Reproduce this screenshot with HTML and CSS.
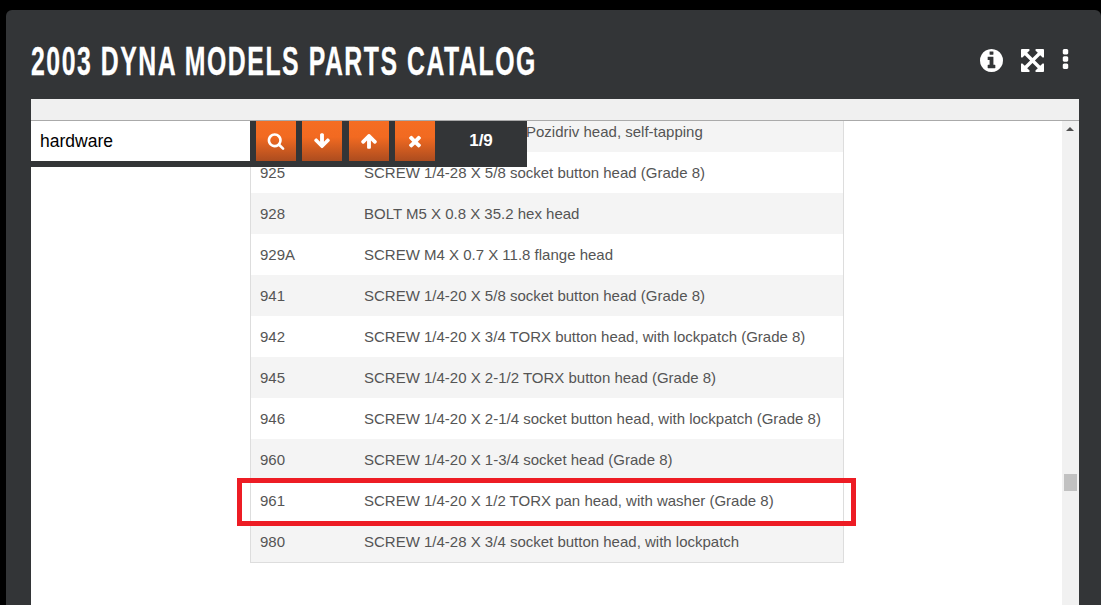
FILE: index.html
```html
<!DOCTYPE html>
<html lang="en">
<head>
<meta charset="utf-8">
<title>2003 Dyna Models Parts Catalog</title>
<link rel="stylesheet" href="styles.css">
</head>
<body>
<main class="panel">
  <header class="head">
    <h1 class="title">2003 DYNA MODELS PARTS CATALOG</h1>
    <div class="head-icons">
      <svg class="ico-info" viewBox="128 128 1536 1536"><path d="M1152 1376v-160q0-14-9-23t-23-9h-96v-512q0-14-9-23t-23-9h-320q-14 0-23 9t-9 23v160q0 14 9 23t23 9h96v320h-96q-14 0-23 9t-9 23v160q0 14 9 23t23 9h448q14 0 23-9t9-23zm-128-896v-160q0-14-9-23t-23-9h-192q-14 0-23 9t-9 23v160q0 14 9 23t23 9h192q14 0 23-9t9-23zm640 416q0 209-103 385.5t-279.5 279.5-385.5 103-385.5-103-279.5-279.5-103-385.5 103-385.5 279.5-279.5 385.5-103 385.5 103 279.5 279.5 103 385.5z"/></svg>
      <svg class="ico-expand" viewBox="128 128 1536 1536"><path d="M1411 541l-355 355 355 355 144-144q29-31 70-14 39 17 39 59v448q0 26-19 45t-45 19h-448q-42 0-59-40-17-39 14-69l144-144-355-355-355 355 144 144q31 30 14 69-17 40-59 40h-448q-26 0-45-19t-19-45v-448q0-42 40-59 39-17 69 14l144 144 355-355-355-355-144 144q-19 19-45 19-12 0-24-5-40-17-40-59v-448q0-26 19-45t45-19h448q42 0 59 40 17 39-14 69l-144 144 355 355 355-355-144-144q-31-30-14-69 17-40 59-40h448q26 0 45 19t19 45v448q0 42-39 59-13 5-25 5-26 0-45-19z"/></svg>
      <svg class="ico-more" viewBox="704 128 384 1408"><path d="M1088 1248v192q0 40-28 68t-68 28h-192q-40 0-68-28t-28-68v-192q0-40 28-68t68-28h192q40 0 68 28t28 68zm0-512v192q0 40-28 68t-68 28h-192q-40 0-68-28t-28-68v-192q0-40 28-68t68-28h192q40 0 68 28t28 68zm0-512v192q0 40-28 68t-68 28h-192q-40 0-68-28t-28-68v-192q0-40 28-68t68-28h192q40 0 68 28t28 68z"/></svg>
    </div>
  </header>
  <section class="viewer">
    <div class="strip"></div>
    <div class="body-row">
      <div class="search">
        <div class="search-input">hardware</div>
        <div class="search-actions">
          <button class="btn"><svg class="btn-ico" viewBox="0 0 1792 1792"><path d="M1216 832q0-185-131.5-316.5t-316.5-131.5-316.5 131.5-131.5 316.5 131.5 316.5 316.5 131.5 316.5-131.5 131.5-316.5zm512 832q0 52-38 90t-90 38q-54 0-90-38l-343-342q-179 124-399 124-143 0-273.5-55.5t-225-150-150-225-55.5-273.5 55.5-273.5 150-225 225-150 273.5-55.5 273.5 55.5 225 150 150 225 55.5 273.5q0 220-124 399l343 343q37 37 37 90z"/></svg></button>
          <button class="btn"><svg class="btn-ico" viewBox="0 0 1792 1792"><path d="M1675 832q0 53-37 90l-651 652q-39 37-91 37-53 0-90-37l-651-652q-38-36-38-90 0-53 38-91l74-75q39-37 91-37 53 0 90 37l294 294v-704q0-52 38-90t90-38h128q52 0 90 38t38 90v704l294-294q37-37 90-37 52 0 91 37l75 75q37 39 37 91z"/></svg></button>
          <button class="btn btn-up"><svg class="btn-ico" viewBox="0 0 1792 1792"><path d="M1675 971q0 51-37 90l-75 75q-38 38-91 38-54 0-90-38l-294-293v704q0 52-37.5 84.5t-90.5 32.5h-128q-53 0-90.5-32.5t-37.5-84.5v-704l-294 293q-36 38-90 38t-90-38l-75-75q-38-38-38-90 0-53 38-91l651-651q35-37 90-37 54 0 91 37l651 651q37 39 37 91z"/></svg></button>
          <button class="btn"><svg class="btn-ico" viewBox="0 0 1792 1792"><path d="M1490 1322q0 40-28 68l-136 136q-28 28-68 28t-68-28l-294-294-294 294q-28 28-68 28t-68-28l-136-136q-28-28-28-68t28-68l294-294-294-294q-28-28-28-68t28-68l136-136q28-28 68-28t68 28l294 294 294-294q28-28 68-28t68 28l136 136q28 28 28 68t-28 68l-294 294 294 294q28 28 28 68z"/></svg></button>
          <span class="count">1/9</span>
        </div>
      </div>
      <div class="scroll-area">
        <div class="parts">
          <div class="part part-clipped"><span class="part-name">Pozidriv head, self-tapping</span></div>
          <div class="part"><span class="part-no">925</span><span class="part-name">SCREW 1/4-28 X 5/8 socket button head (Grade 8)</span></div>
          <div class="part"><span class="part-no">928</span><span class="part-name">BOLT M5 X 0.8 X 35.2 hex head</span></div>
          <div class="part"><span class="part-no">929A</span><span class="part-name">SCREW M4 X 0.7 X 11.8 flange head</span></div>
          <div class="part"><span class="part-no">941</span><span class="part-name">SCREW 1/4-20 X 5/8 socket button head (Grade 8)</span></div>
          <div class="part"><span class="part-no">942</span><span class="part-name">SCREW 1/4-20 X 3/4 TORX button head, with lockpatch (Grade 8)</span></div>
          <div class="part"><span class="part-no">945</span><span class="part-name">SCREW 1/4-20 X 2-1/2 TORX button head (Grade 8)</span></div>
          <div class="part"><span class="part-no">946</span><span class="part-name">SCREW 1/4-20 X 2-1/4 socket button head, with lockpatch (Grade 8)</span></div>
          <div class="part"><span class="part-no">960</span><span class="part-name">SCREW 1/4-20 X 1-3/4 socket head (Grade 8)</span></div>
          <div class="part part-marked"><span class="part-no">961</span><span class="part-name">SCREW 1/4-20 X 1/2 TORX pan head, with washer (Grade 8)</span><span class="marker"></span></div>
          <div class="part"><span class="part-no">980</span><span class="part-name">SCREW 1/4-28 X 3/4 socket button head, with lockpatch</span></div>
        </div>
      </div>
      <div class="scrollbar">
        <span class="scroll-arrow"></span>
        <span class="scroll-thumb"></span>
      </div>
    </div>
  </section>
</main>
</body>
</html>
```
FILE: styles.css
```css
html, body {
  margin: 0;
  height: 605px;
  overflow: hidden;
  background: #000;
}

.panel {
  margin: 10px 0 0 6px;
  height: 595px;
  box-sizing: border-box;
  padding: 0 22px 0 25px;
  background: #333537;
  border-radius: 6px 6px 0 0;
  display: flex;
  flex-direction: column;
}

.head {
  height: 89px;
  flex: none;
  display: flex;
  align-items: flex-start;
  justify-content: space-between;
}

.title {
  margin: 30px 0 0;
  font: 700 40px/42px "Liberation Sans", sans-serif;
  letter-spacing: 2.5px;
  color: #fff;
  white-space: nowrap;
  transform: scaleX(0.62);
  transform-origin: left center;
  -webkit-text-stroke: 0.3px #fff;
}

.head-icons {
  display: flex;
  align-items: flex-start;
  margin: 39px 10px 0 0;
  fill: #fff;
}

.ico-info {
  width: 23px;
  height: 23px;
  margin-right: 18px;
}

.ico-expand {
  width: 23px;
  height: 23px;
  margin-right: 18px;
}

.ico-more {
  width: 7px;
  height: 20px;
}

.viewer {
  flex: 1;
  min-height: 0;
  display: flex;
  flex-direction: column;
  background: #fff;
}

.strip {
  height: 21px;
  flex: none;
  background: #f0f0f0;
  border-bottom: 1px solid #aaa;
}

.body-row {
  flex: 1;
  min-height: 0;
  display: flex;
  position: relative;
}

.search {
  position: absolute;
  z-index: 2;
  left: 0;
  top: 0;
  display: flex;
  background: #333537;
  padding-bottom: 6px;
}

.search-input {
  width: 210px;
  height: 40px;
  padding-left: 9px;
  background: #fff;
  font: 17.5px/40px "Liberation Sans", Arial, sans-serif;
  color: #000;
}

.search-actions {
  display: flex;
  gap: 6px;
  padding-left: 6px;
}

.btn {
  width: 40px;
  height: 40px;
  padding: 0;
  border: 0;
  display: flex;
  align-items: center;
  justify-content: center;
  background: linear-gradient(#f56d22 0%, #f26a21 40%, #ac4c1f 100%);
}

.btn-up {
  margin-left: 1px;
}

.btn-ico {
  width: 18px;
  height: 18px;
  fill: #fff;
}

.count {
  width: 92px;
  height: 40px;
  margin-left: -6px;
  text-align: center;
  font: 700 17px/40px "Liberation Sans", Arial, sans-serif;
  color: #fff;
}

.scroll-area {
  flex: 1;
  min-width: 0;
  overflow: hidden;
}

.parts {
  width: 592px;
  margin: -10px 0 0 219px;
  border: 1px solid #ddd;
  border-top: 0;
}

.part {
  height: 41px;
  display: flex;
  align-items: center;
  position: relative;
  font: 15px/20px "Liberation Sans", Arial, sans-serif;
  color: #555;
}

.part:nth-child(odd) {
  background: #f4f4f4;
}

.part-clipped {
  padding-left: 266px;
}

.part-marked {
  z-index: 1;
}

.part-no {
  width: 104px;
  flex: none;
  padding-left: 9px;
  box-sizing: border-box;
}

.part-name {
  margin-left: 9px;
  white-space: nowrap;
}

.marker {
  position: absolute;
  left: -14px;
  right: -13px;
  top: -2px;
  bottom: -5px;
  border: 5px solid #ed1c24;
}

.scrollbar {
  width: 17px;
  flex: none;
  position: relative;
  background: #f1f1f1;
}

.scroll-arrow {
  position: absolute;
  left: 4px;
  top: 6px;
  border-left: 4px solid transparent;
  border-right: 4px solid transparent;
  border-bottom: 4px solid #505050;
}

.scroll-thumb {
  position: absolute;
  left: 2px;
  top: 353px;
  width: 13px;
  height: 17px;
  background: #c1c1c1;
}
```
